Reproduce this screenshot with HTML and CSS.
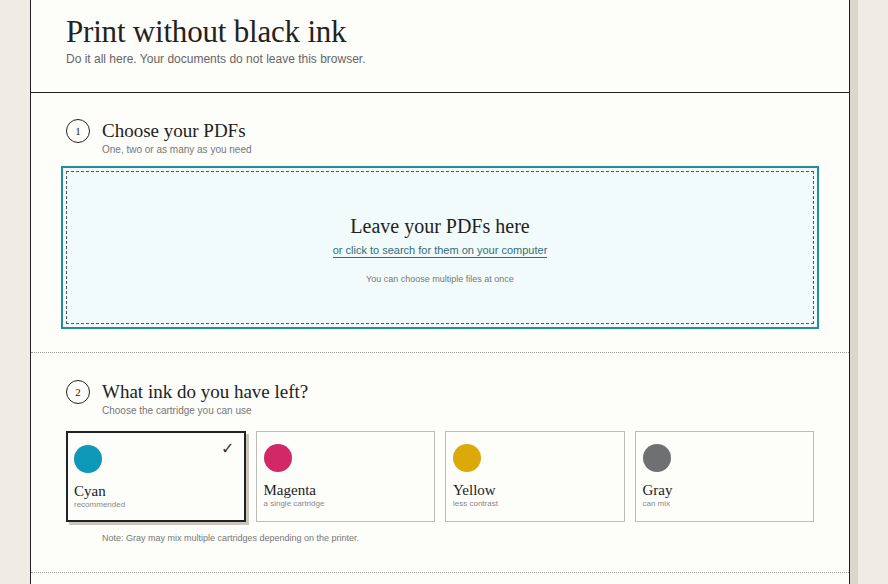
FILE: index.html
```html
<!DOCTYPE html>
<html lang="en">
<head>
<meta charset="utf-8">
<title>Print without black ink</title>
<link rel="stylesheet" href="styles.css">
</head>
<body>
<div class="page">
  <header class="header">
    <h1 class="title">Print without black ink</h1>
    <p class="lead">Do it all here. Your documents do not leave this browser.</p>
  </header>

  <section class="step">
    <div class="step-head">
      <span class="num">1</span>
      <div>
        <h2 class="step-title">Choose your PDFs</h2>
        <p class="step-sub">One, two or as many as you need</p>
      </div>
    </div>
    <div class="drop">
      <div class="drop-inner">
        <p class="drop-title">Leave your PDFs here</p>
        <a class="drop-link" href="#">or click to search for them on your computer</a>
        <p class="drop-hint">You can choose multiple files at once</p>
      </div>
    </div>
  </section>

  <section class="step step-two">
    <div class="step-head">
      <span class="num">2</span>
      <div>
        <h2 class="step-title">What ink do you have left?</h2>
        <p class="step-sub">Choose the cartridge you can use</p>
      </div>
    </div>
    <div class="cards">
      <div class="card selected">
        <span class="dot cyan"></span>
        <span class="check">✓</span>
        <div class="card-name">Cyan</div>
        <div class="card-sub">recommended</div>
      </div>
      <div class="card">
        <span class="dot magenta"></span>
        <div class="card-name">Magenta</div>
        <div class="card-sub">a single cartridge</div>
      </div>
      <div class="card">
        <span class="dot yellow"></span>
        <div class="card-name">Yellow</div>
        <div class="card-sub">less contrast</div>
      </div>
      <div class="card">
        <span class="dot gray"></span>
        <div class="card-name">Gray</div>
        <div class="card-sub">can mix</div>
      </div>
    </div>
    <p class="note">Note: Gray may mix multiple cartridges depending on the printer.</p>
  </section>
  <section class="step step-three"></section>
</div>
</body>
</html>
```

FILE: styles.css
```css
* { box-sizing: border-box; }
html, body {
  margin: 0;
  padding: 0;
  background: #efece6;
  height: 100%;
  overflow: hidden;
}
body {
  font-family: "Liberation Sans", Arial, sans-serif;
  color: #222;
}
.page {
  width: 820px;
  margin-left: 30px;
  min-height: 584px;
  background: #fdfdfa;
  border-left: 1px solid #222;
  border-right: 1px solid #222;
  box-shadow: 8px 0 0 #dad7cb;
}
.header {
  padding: 14px 35px 0;
  height: 93px;
  border-bottom: 1px solid #222;
}
.title {
  margin: 0;
  font-family: "Liberation Serif", "DejaVu Serif", serif;
  font-weight: normal;
  font-size: 31px;
  line-height: 36px;
  color: #222;
  letter-spacing: -0.2px;
}
.lead {
  margin: 1px 0 0;
  font-size: 12px;
  line-height: 16px;
  color: #666;
}
.step {
  padding: 26px 35px 23px;
  border-bottom: 1px dotted #999;
}
.step-two { padding-top: 27px; padding-bottom: 28px; }
.step-three { border-bottom: none; padding: 0; height: 20px; }
.step-head {
  display: flex;
  align-items: flex-start;
  gap: 12px;
}
.num {
  width: 24px;
  height: 24px;
  border: 1px solid #222;
  border-radius: 50%;
  display: flex;
  align-items: center;
  justify-content: center;
  font-family: "Liberation Serif", serif;
  font-size: 11px;
  flex: none;
}
.step-title {
  margin: 0;
  font-family: "Liberation Serif", serif;
  font-weight: normal;
  font-size: 19px;
  line-height: 24px;
  color: #222;
}
.step-sub {
  margin: 0;
  font-size: 10px;
  line-height: 14px;
  color: #777;
}
.drop {
  margin: 9px -5px 0;
  border: 2px solid #1f8e9e;
  padding: 3px;
  background: #f2fbfb;
}
.drop-inner {
  border: 1px dashed #555;
  height: 153px;
  display: flex;
  flex-direction: column;
  align-items: center;
  padding-top: 42px;
}
.drop-title {
  margin: 0;
  font-family: "Liberation Serif", serif;
  font-size: 20px;
  line-height: 24px;
  color: #222;
}
.drop-link {
  margin-top: 6px;
  font-size: 11px;
  line-height: 13px;
  color: #2f6e76;
  text-decoration: none;
  border-bottom: 1px solid #2f6e76;
}
.drop-hint {
  margin: 15px 0 0;
  font-size: 9px;
  line-height: 12px;
  color: #777;
}
.cards {
  margin-top: 13px;
  display: grid;
  grid-template-columns: repeat(4, 1fr);
  gap: 10px;
}
.card {
  position: relative;
  height: 91px;
  border: 1px solid #bdbdb5;
  padding: 12px 7px 0;
  background: #fdfdfa;
}
.card.selected {
  border: 2px solid #222;
  padding: 12px 6px 0;
  box-shadow: 3px 3px 0 #c9c7bd;
}
.dot {
  display: block;
  width: 28px;
  height: 28px;
  border-radius: 50%;
}
.cyan { background: #0f97b7; }
.magenta { background: #d22966; }
.yellow { background: #dca90a; }
.gray { background: #6e7071; }
.check {
  position: absolute;
  right: 9px;
  top: 6px;
  font-family: "DejaVu Sans", sans-serif;
  font-size: 16px;
  line-height: 20px;
  color: #333;
}
.card-name {
  margin-top: 9px;
  font-family: "Liberation Serif", serif;
  font-size: 15px;
  line-height: 18px;
  color: #222;
}
.card-sub {
  font-size: 8px;
  line-height: 10px;
  color: #888;
}
.note {
  margin: 10px 0 0 36px;
  font-size: 9px;
  line-height: 12px;
  color: #777;
}
```
